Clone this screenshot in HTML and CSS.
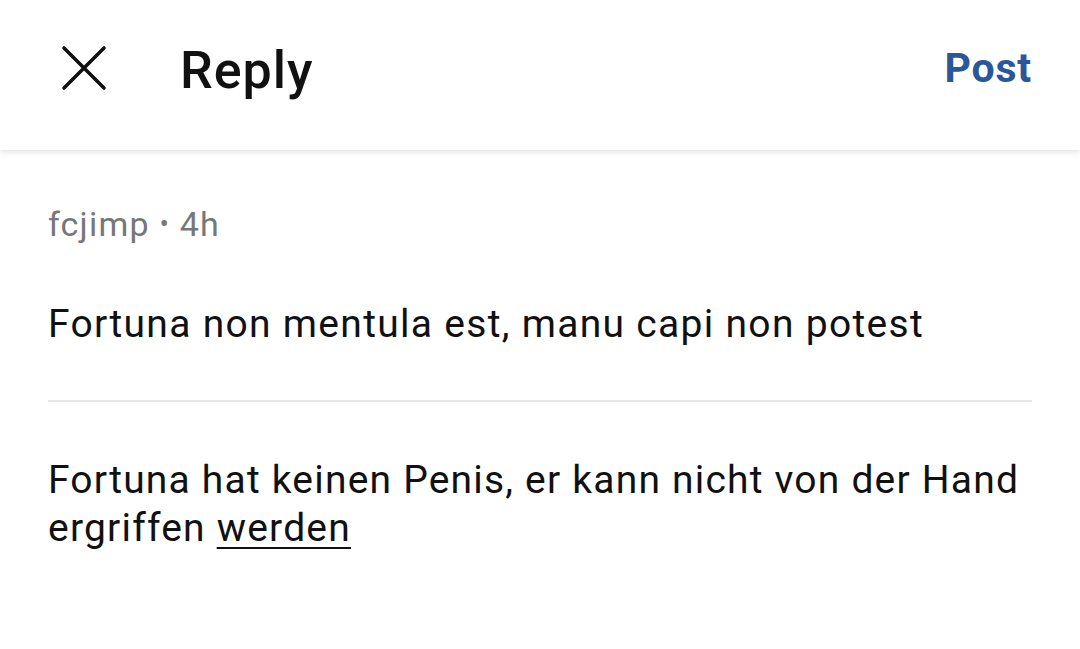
FILE: index.html
```html
<!DOCTYPE html>
<html lang="en">
<head>
	<meta charset="UTF-8">
	<meta name="viewport" content="width=device-width, initial-scale=1.0">
	<title>Reply</title>
	<link rel="stylesheet" href="styles.css">
</head>
<body>
	<div class="top_bar">
		<div class="top_left">
			<button class="btn_close" type="button" aria-label="Close">
				<svg width="48" height="48" viewBox="0 0 48 48">
					<path d="M4 4 L44 44 M44 4 L4 44" stroke="#111" stroke-width="3.6" stroke-linecap="round" fill="none"/>
				</svg>
			</button>
			<h1 class="top_title">Reply</h1>
		</div>
		<span class="btn_post">Post</span>
	</div>

	<div class="cont_m">
		<div class="meta">fcjimp <span class="dot">•</span> 4h</div>
		<p class="quote">Fortuna non mentula est, manu capi non potest</p>
		<hr class="sep">
		<p class="reply">Fortuna hat keinen Penis, er kann nicht von der Hand ergriffen <u>werden</u></p>
	</div>
</body>
</html>
```

FILE: styles.css
```css
body {
	margin: 0;
	background-color: #FFFFFF;
	font-family: Roboto, "Noto Sans", Arial, sans-serif;
	color: #111111;
}

.top_bar {
	display: flex;
	align-items: center;
	justify-content: space-between;
	height: 150px;
	padding: 0 48px 0 60px;
	box-sizing: border-box;
	background-color: #FFFFFF;
	box-shadow: 0 2px 6px rgba(0,0,0,0.12);
	position: relative;
}

.top_left {
	display: flex;
	align-items: center;
}

.btn_close {
	background: none;
	border: none;
	padding: 0;
	width: 48px;
	height: 48px;
	margin-top: -14px;
	cursor: pointer;
}

.btn_close svg {
	display: block;
}

.top_title {
	margin: -10px 0 0 72px;
	font-size: 52px;
	font-weight: 500;
	letter-spacing: 1px;
}

.btn_post {
	color: #2B569A;
	font-size: 41px;
	font-weight: 700;
	letter-spacing: 0.8px;
	margin-top: -14px;
}

.cont_m {
	padding: 0 48px;
}

.meta {
	margin-top: 54px;
	font-size: 34px;
	letter-spacing: 1.2px;
	color: #777777;
}

.meta .dot {
	font-size: 28px;
	vertical-align: 3px;
}

.quote {
	margin: 56px 0 0 0;
	font-size: 39px;
	line-height: 48px;
	letter-spacing: 1.3px;
}

.sep {
	border: none;
	border-top: 2px solid #E8E8E8;
	margin: 52px 0 0 0;
}

.reply {
	margin: 54px 0 0 0;
	font-size: 39px;
	line-height: 48px;
	letter-spacing: 1.2px;
}

.reply u {
	text-decoration-thickness: 2px;
	text-underline-offset: 6px;
}
```
